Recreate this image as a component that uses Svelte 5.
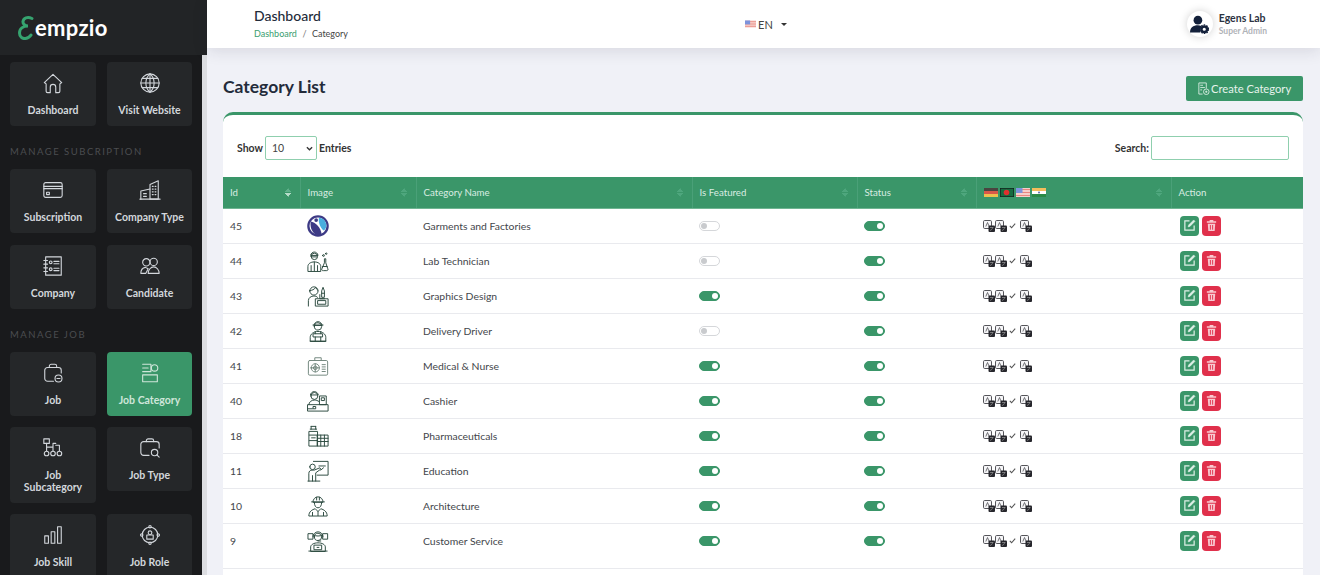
<script>
  const circ = (x, y, r) => `M${x - r} ${y}a${r} ${r} 0 1 0 ${r * 2} 0a${r} ${r} 0 1 0 ${-r * 2} 0z`;
  const box = (x, y, w, h) => `M${x} ${y}h${w}v${h}h${-w}z`;

  const icons = {
    home: ["M2.500 11.500 12 2.500l9.500 9-2 1.500v8a1.500 1.500 0 0 1-1.500 1.500h-3v-6a3 3 0 0 0-6 0v6H6a1.500 1.500 0 0 1-1.500-1.500v-8z"],
    globe: [circ(12, 12, 10), "M2 12h20M3.400 7h17.200M3.400 17h17.200M12 2v20", "M12 2c-6 5-6 15 0 20M12 2c6 5 6 15 0 20"],
    card: ["M4 4h16a2 2 0 0 1 2 2v12a2 2 0 0 1-2 2H4a2 2 0 0 1-2-2V6a2 2 0 0 1 2-2z", "M2 8h20M2 10.500h20", box(5, 14.500, 3, 2.500)],
    building: ["M12 22V6l9-4v20z", "M2 22v-9l10-2", "M1 22h22", "M14.500 8h1M17.500 8h1M14.500 11h1M17.500 11h1M14.500 14h1M17.500 14h1M14.500 17h1M17.500 17h1M5 16h3M5 19h3"],
    book: [box(4, 2, 17, 20), "M2 6h4M2 10h4M2 14h4M2 18h4", circ(9.500, 8, 1.500), circ(9.500, 15.500, 1.500), "M13 7h5.500M13 9.500h5.500M13 14.500h5.500M13 17h5.500"],
    people: [circ(8, 8, 4), circ(16, 7.500, 4), "M2 20c0-4 2-6 5-6.500l3 1.500-2.500 5z", "M10 20c0-4 3-7 6-7s6 3 6 7z"],
    jobicon: ["M8 6V4.500A2 2 0 0 1 10 2.500h4a2 2 0 0 1 2 2V6", "M12.500 21H6a3 3 0 0 1-3-3V9a3 3 0 0 1 3-3h12a3 3 0 0 1 3 3v3", circ(18, 18, 3.800), "M16.300 18h3.400"],
    category: ["M4 2.500h9v8H4", circ(17, 6.500, 3.500), box(4, 14, 16, 7.500), "M4 6.500h6"],
    tree: [box(2, 2, 6, 5), "M5 7v8M5 11h7V7h3M12 11v4M19 11v4M15 9h4v2", circ(5, 18, 2.500), circ(12, 18, 2.500), circ(19, 18, 2.500)],
    jobtype: ["M8 5V4a2 2 0 0 1 2-2h4a2 2 0 0 1 2 2v1", "M11 20H5a3 3 0 0 1-3-3V8a3 3 0 0 1 3-3h14a3 3 0 0 1 3 3v4", circ(17, 17, 3.500), "M19.500 19.500 22 22"],
    bars: [box(3, 13, 4, 8), box(10, 8.500, 4, 12.500), box(17, 3, 4, 18)],
    role: [circ(12, 12, 8.500), box(8.500, 12, 7, 4.500), circ(12, 9.500, 2), circ(12, 3, 1.300), circ(12, 21, 1.300), circ(3, 12, 1.300), circ(21, 12, 1.300)],

    lab: [circ(8, 7, 3.500), "M4 5.500c1-4.500 7-4.500 8 0z", "M5 7.500h6", "M1 23v-5c0-3 3-5 7-5s7 2 7 5v5z", "M8 13v10M4.500 17v6M11.500 17v6", "M19 10v4l-2.500 6a1.500 1.500 0 0 0 1.500 2.500h3a1.500 1.500 0 0 0 1.500-2.500L20.500 14v-4z", "M17 18h5", circ(18, 6, 1), circ(21, 4, .8)],
    design: [circ(7.500, 6.500, 4.500), "M3 6c2.500 0 5-1 6.500-3.500 .5 1.500 1.500 3 2.500 3.500", "M1.500 23v-6c0-3 3-5 6-5 2 0 3 .500 4 1.500", box(9.500, 15, 13.500, 8), box(12, 17, 8.500, 4), "M16 13V6.500l1.500-4 1.500 4V13zM16 9h3M14 10.500v4.500h5"],
    driver: [circ(12, 7, 4), "M7.500 5.500c1-5 8-5 9 0z", "M6.500 5.500h11", "M3.500 23v-4c0-3.500 3.500-6.500 8.500-6.500s8.500 3 8.500 6.500v4z", box(7, 15, 10, 3.500), "M3.500 23h17M9 12.500V15M15 12.500V15M9 18.500V23M15 18.500V23"],
    medical: ["M3 6h18a1.500 1.500 0 0 1 1.500 1.500v13A1.500 1.500 0 0 1 21 22H3a1.500 1.500 0 0 1-1.500-1.500v-13A1.500 1.500 0 0 1 3 6z", "M8.500 6V3h7v3", circ(9, 14, 4.500), circ(9, 14, 2), "M9 9.500v9M4.500 14h9M16.500 10.500h3.500M16.500 13h3.500M16.500 15.500h3.500M16.500 18h3.500"],
    cashier: [circ(8, 6.500, 3.800), "M3.800 5c1-4.500 7.400-4.500 8.400 0z", "M2 16c0-3 3-5 6-5 2 0 3.500.500 5 1.500", box(1, 16, 22, 7), box(14, 6.500, 7, 9.500), box(16, 8.500, 3, 3), box(7, 18, 2.500, 2.500), "M1 20.500h5"],
    pharma: [box(2.500, 7, 9, 16), "M3.500 4.500h7M4.500 1.500h5M4.500 1.500v3M9.500 1.500v3M2.500 11h9M2.500 17h9", box(11.500, 11, 11.500, 12), "M11.500 14.500h11.500M11.500 18h11.500M15 11v12M19 11v12M5 14h4"],
    teacher: [circ(6, 7.500, 3), "M2 23v-8.500c0-2 1.500-3.500 3.500-3.500h2.500l6-2.500 1 1.500-5.500 4V23", "M6 17v6M1 23h13", "M7 1.500h16v15H11", "M13 6.500h7M15 11l3-2.500"],
    architect: ["M6.500 7.500a5.500 5.500 0 0 1 11 0zM5 7.500h14M10.500 2.500v3M13.500 2.500v3", "M8 8c0 3.500 1.500 6 4 6s4-2.500 4-6", "M2 22.500c0-4.500 3.500-6.500 7-7.500l3 3 3-3c3.500 1 7 3 7 7.500z", "M12 18v4.500M6 19v3.500M18 19v3.500"],
    support: [circ(12, 7.500, 4), "M6.500 7.500a5.500 5.500 0 0 1 11 0M12 12h3", "M7 5.500C9 7 15 7 17 5.500", box(1.500, 4, 5, 6), box(17.500, 4, 5, 6), "M4 23v-4.500c0-2.500 3.500-4.500 8-4.500s8 2 8 4.500V23z", box(8, 16.500, 8, 5), "M2 23h20M11 19h2"]
  };

  const nav = [
    { items: [["home", "Dashboard"], ["globe", "Visit Website"]] },
    { title: "MANAGE SUBCRIPTION", items: [["card", "Subscription"], ["building", "Company Type"], ["book", "Company"], ["people", "Candidate"]] },
    { title: "MANAGE JOB", items: [["jobicon", "Job"], ["category", "Job Category"], ["tree", "Job Subcategory"], ["jobtype", "Job Type"], ["bars", "Job Skill"], ["role", "Job Role"]] }
  ];

  const rows = [
    { id: 45, icon: "logo", name: "Garments and Factories", featured: false },
    { id: 44, icon: "lab", name: "Lab Technician", featured: false },
    { id: 43, icon: "design", name: "Graphics Design", featured: true },
    { id: 42, icon: "driver", name: "Delivery Driver", featured: false },
    { id: 41, icon: "medical", name: "Medical & Nurse", featured: true },
    { id: 40, icon: "cashier", name: "Cashier", featured: true },
    { id: 18, icon: "pharma", name: "Pharmaceuticals", featured: true },
    { id: 11, icon: "teacher", name: "Education", featured: true },
    { id: 10, icon: "architect", name: "Architecture", featured: true },
    { id: 9, icon: "support", name: "Customer Service", featured: true }
  ];

  const columns = ["Id", "Image", "Category Name", "Is Featured", "Status", "", "Action"];
</script>

{#snippet icon(name, cls)}
  <svg class={cls} viewBox="0 0 24 24" fill="none" stroke="currentColor" stroke-linejoin="round" stroke-linecap="round" aria-hidden="true">
    {#each icons[name] as d}<path {d} />{/each}
  </svg>
{/snippet}

{#snippet usFlag()}
  <svg class="flag" viewBox="0 0 14 9" aria-hidden="true">
    <rect width="14" height="9" fill="#f6cfc9" />
    <path d="M0 1.500h14M0 4.500h14M0 7.500h14" stroke="#e8877f" />
    <rect width="6.500" height="5" fill="#7d93dc" />
  </svg>
{/snippet}

{#snippet translate()}
  <svg class="tr" viewBox="0 0 12 12" aria-hidden="true">
    <rect x=".5" y=".5" width="8" height="8" rx="1.200" fill="#f6f6f8" stroke="#55555a" />
    <path d="M2.800 6.500 4.500 2.500l1.700 4" fill="none" stroke="#55555a" stroke-width=".8" />
    <rect x="5.500" y="5.500" width="6.500" height="6.500" rx="1" fill="#26262c" />
    <path d="M7 7.500h3.500M9.500 7.500c0 1.500-1 2.500-2.500 3" fill="none" stroke="#aaa" stroke-width=".6" />
  </svg>
{/snippet}

<div class="app">
  <aside class="sidebar">
    <div class="brand">
      <svg class="brand-mark" viewBox="0 0 16 24" fill="none" stroke="#36a36f" stroke-width="3" stroke-linecap="round" aria-hidden="true">
        <path d="M14.500 2.500C10 .5 6 2 5.500 5.500c-.3 2.500 2 4.500 5 4.500-5 0-8.500 2.500-8.500 7 0 4 3 6 6 5.500 2.500-.4 4.500-1.800 5.500-3.500" />
      </svg>
      <span>empzio</span>
    </div>
    <div class="side-body">
      <nav>
        {#each nav as group}
          {#if group.title}<h6>{group.title}</h6>{/if}
          <div class="tiles">
            {#each group.items as [ic, label]}
              <a class="tile" class:active={label === "Job Category"} href="#top">
                {@render icon(ic, "tile-icon")}
                <span>{label}</span>
              </a>
            {/each}
          </div>
        {/each}
      </nav>
      <div class="scrollbar"></div>
    </div>
  </aside>

  <div class="main">
    <header class="topbar">
      <div class="crumbs">
        <h1>Dashboard</h1>
        <p><a href="#top">Dashboard</a><i>/</i>Category</p>
      </div>
      <div class="lang">
        {@render usFlag()}
        <span>EN</span>
        <b class="caret"></b>
      </div>
      <div class="user">
        <div class="avatar">
          <svg viewBox="0 0 24 24" aria-hidden="true">
            <circle cx="10" cy="6.500" r="5.500" fill="#13203a" />
            <path d="M0 22c0-6 4-9 10-9 1.500 0 3 .3 4 1l-1 8z" fill="#13203a" />
            <circle cx="18" cy="18" r="3.500" fill="none" stroke="#13203a" stroke-width="3" />
            <circle cx="18" cy="18" r="5.500" fill="none" stroke="#13203a" stroke-width="1.500" stroke-dasharray="2 1.500" />
          </svg>
        </div>
        <div>
          <strong>Egens Lab</strong>
          <small>Super Admin</small>
        </div>
      </div>
    </header>

    <main class="content">
      <div class="title-row">
        <h2>Category List</h2>
        <button class="create">
          <svg viewBox="0 0 14 14" fill="none" stroke="currentColor" stroke-width=".9" aria-hidden="true">
            <path d="M6 13H2V1h8v6" />
            <path d="M3.500 3.500h3M3.500 6h5M3.500 8.500h2" />
            <circle cx="10" cy="10.500" r="3" />
            <path d="M8.800 10.500h2.400M10 9.300v2.400" />
          </svg>
          Create Category
        </button>
      </div>

      <section class="card">
        <div class="controls">
          <label>Show
            <select>
              <option>10</option>
              <option>25</option>
              <option>50</option>
            </select>
            Entries
          </label>
          <label>Search:
            <input type="search" />
          </label>
        </div>

        <table>
          <colgroup>
            <col style="width: 77px" />
            <col style="width: 116px" />
            <col style="width: 276px" />
            <col style="width: 165px" />
            <col style="width: 119px" />
            <col style="width: 195px" />
            <col style="width: 132px" />
          </colgroup>
          <thead>
            <tr>
              {#each columns as col}
                <th>
                  {#if col}
                    {col}
                  {:else}
                    <span class="flags">
                      <svg class="flag" viewBox="0 0 14 9" aria-hidden="true">
                        <rect width="14" height="3" fill="#4a4440" />
                        <rect y="3" width="14" height="3" fill="#d9584a" />
                        <rect y="6" width="14" height="3" fill="#eec04e" />
                      </svg>
                      <svg class="flag" viewBox="0 0 14 9" aria-hidden="true">
                        <rect x=".4" y=".4" width="13.200" height="8.200" fill="#156b40" stroke="#10261c" stroke-width=".8" />
                        <circle cx="6.500" cy="4.500" r="2.800" fill="#e0302e" />
                      </svg>
                      {@render usFlag()}
                      <svg class="flag" viewBox="0 0 14 9" aria-hidden="true">
                        <rect width="14" height="3" fill="#f4bd5c" />
                        <rect y="3" width="14" height="3" fill="#fff" />
                        <rect y="6" width="14" height="3" fill="#2a8a45" />
                        <circle cx="7" cy="4.500" r="1" fill="#5a6ba8" />
                      </svg>
                    </span>
                  {/if}
                  {#if col !== "Action"}
                    <span class="sort" class:desc={col === "Id"}></span>
                  {/if}
                </th>
              {/each}
            </tr>
          </thead>
          <tbody>
            {#each rows as row}
              <tr>
                <td>{row.id}</td>
                <td>
                  {#if row.icon === "logo"}
                    <svg class="cat-icon" viewBox="0 0 24 24" aria-hidden="true">
                      <circle cx="12" cy="12" r="10.500" fill="#fff" stroke="#3d3a85" stroke-width="2.500" />
                      <path d="M13 3a9 9 0 0 1 8 7c.500 3-1 6-3 7-3-3-6-8-5-14z" fill="#49aede" />
                      <path d="M4 7c5 1 11 6 12 14-1 1-3 1.500-5 1C6 20 3 14 4 7z" fill="#3d3a85" />
                      <circle cx="10" cy="5.500" r="2" fill="#3d3a85" />
                    </svg>
                  {:else}
                    {@render icon(row.icon, row.icon === "medical" ? "cat-icon pale" : "cat-icon")}
                  {/if}
                </td>
                <td>{row.name}</td>
                <td><span class="switch" class:on={row.featured}></span></td>
                <td><span class="switch on"></span></td>
                <td>
                  <span class="translations">
                    {@render translate()}
                    {@render translate()}
                    <svg class="tick" viewBox="0 0 10 10" aria-hidden="true">
                      <path d="M2 5.500 4 7.500 8 3" fill="none" stroke="#555" stroke-width="1.200" />
                    </svg>
                    {@render translate()}
                  </span>
                </td>
                <td>
                  <span class="actions">
                    <button class="btn edit" aria-label="Edit">
                      <svg viewBox="0 0 14 14" fill="none" stroke="currentColor" stroke-width="1.300" aria-hidden="true">
                        <path d="M7 2H2v10h10V7" />
                        <path d="M5.500 8.500 6 6.500 11.500 1l1.500 1.500L7.500 8z" fill="currentColor" stroke-width=".5" />
                      </svg>
                    </button>
                    <button class="btn del" aria-label="Delete">
                      <svg viewBox="0 0 14 14" aria-hidden="true">
                        <path d="M2 2.500h10v1.500H2zM5 1h4v1.500H5z" fill="currentColor" />
                        <path d="M3 5h8l-.6 8H3.600z" fill="currentColor" />
                        <path d="M5.800 6.500v5M8.200 6.500v5" stroke="#e0304b" />
                      </svg>
                    </button>
                  </span>
                </td>
              </tr>
            {/each}
          </tbody>
        </table>
      </section>
    </main>
  </div>
</div>

<style>
  :global(body) {
    margin: 0;
    font-family: Lato, "Liberation Sans", sans-serif;
  }

  .app {
    display: flex;
    height: 575px;
    overflow: hidden;
    background: #f0f1f7;
  }

  .sidebar {
    flex: 0 0 207px;
    display: flex;
    flex-direction: column;
    background: #191a1c;
  }

  .brand {
    flex: 0 0 55px;
    display: flex;
    align-items: center;
    padding-left: 17px;
    background: #222426;
    color: #fff;
    font-size: 22px;
    font-weight: 700;
    letter-spacing: 0.3px;
    box-sizing: border-box;
  }

  .brand-mark {
    width: 17px;
    height: 24px;
    margin-right: 1px;
  }

  .side-body {
    flex: 1;
    display: flex;
    min-height: 0;
  }

  nav {
    flex: 1;
    padding: 7px 10px 0;
  }

  .scrollbar {
    flex: 0 0 5px;
    background: #dcdde1;
  }

  h6 {
    margin: 0;
    padding: 19px 0 10px;
    font-size: 9.500px;
    font-weight: 400;
    line-height: 14px;
    letter-spacing: 1.500px;
    color: #4b4d50;
  }

  .tiles {
    display: grid;
    grid-template-columns: 86px 85px;
    gap: 11.500px 11px;
    align-items: start;
  }

  .tiles:last-child {
    row-gap: 11px;
  }

  .tile {
    display: flex;
    flex-direction: column;
    align-items: center;
    padding: 10px 6px 10px;
    border-radius: 4px;
    background: #252729;
    color: #d3d7dc;
    font-size: 10.500px;
    font-weight: 700;
    line-height: 12px;
    text-align: center;
    text-decoration: none;
  }

  .tile.active {
    background: #3a9669;
    color: #cfe6da;
  }

  .tile-icon {
    width: 22px;
    height: 22px;
    margin-bottom: 10px;
    stroke-width: 1.200;
  }

  .main {
    flex: 1;
    min-width: 0;
  }

  .topbar {
    display: grid;
    grid-template-columns: 1fr auto 1fr;
    align-items: center;
    height: 48px;
    padding: 0 53px 0 47px;
    background: #fff;
    box-shadow: 0 3px 16px rgba(30, 35, 60, 0.12);
    position: relative;
  }

  .crumbs {
    padding-bottom: 2px;
  }

  h1 {
    margin: 0 0 4px;
    font-size: 14px;
    font-weight: 500;
    line-height: 17px;
    color: #232b3a;
  }

  .crumbs p {
    margin: 0;
    font-size: 9px;
    line-height: 12px;
    color: #444;
  }

  .crumbs a {
    color: #3a9e70;
    text-decoration: none;
  }

  .crumbs i {
    margin: 0 5.500px;
    font-style: normal;
    color: #777;
  }

  .lang {
    display: flex;
    align-items: center;
    margin-left: 11px;
    font-size: 11px;
    color: #444;
  }

  .lang .flag {
    width: 11px;
    height: 8px;
    margin-right: 2px;
  }

  .caret {
    margin-left: 8px;
    border: 3px solid transparent;
    border-top: 3px solid #333;
    border-bottom: 0;
  }

  .user {
    justify-self: end;
    display: flex;
    align-items: center;
    gap: 6px;
  }

  .avatar {
    display: flex;
    align-items: center;
    justify-content: center;
    width: 26px;
    height: 26px;
    border-radius: 50%;
    background: #fff;
    box-shadow: 0 0 8px rgba(0, 0, 0, 0.18);
  }

  .avatar svg {
    width: 19px;
    height: 19px;
  }

  .user strong {
    display: block;
    font-size: 10.500px;
    line-height: 13px;
    color: #2c3342;
  }

  .user small {
    display: block;
    margin-top: 1px;
    font-size: 8.500px;
    font-weight: 700;
    line-height: 11px;
    color: #b0b3b8;
  }

  .content {
    padding: 28px 17px 0 16px;
  }

  .title-row {
    display: flex;
    justify-content: space-between;
    align-items: flex-start;
    margin-bottom: 11px;
  }

  h2 {
    margin: 0;
    font-size: 17.500px;
    font-weight: 700;
    line-height: 22px;
    color: #232b3a;
  }

  .create {
    display: flex;
    align-items: center;
    gap: 1px;
    height: 25px;
    width: 117px;
    padding: 0 0 0 11px;
    border: 0;
    border-radius: 2px;
    background: #3a9669;
    color: #e6f3ec;
    font: 400 11.200px Lato, sans-serif;
  }

  .create svg {
    width: 13px;
    height: 13px;
  }

  .card {
    border-top: 3px solid #3a9669;
    border-radius: 10px 10px 0 0;
    background: #fff;
    min-height: 460px;
  }

  .controls {
    display: flex;
    justify-content: space-between;
    align-items: center;
    height: 62px;
    padding: 4px 14px 0;
    box-sizing: border-box;
    font-size: 10.500px;
    font-weight: 700;
    color: #333;
  }

  .controls label {
    display: flex;
    align-items: center;
    gap: 2px;
  }

  select,
  input {
    box-sizing: border-box;
    height: 24px;
    border: 1px solid #8fcfae;
    border-radius: 2px;
    background: #fff;
    font: 400 10.500px Lato, sans-serif;
    color: #444;
    outline: none;
  }

  select {
    appearance: none;
    width: 52px;
    padding-left: 6px;
    background: #fff url("data:image/svg+xml,%3Csvg xmlns='http://www.w3.org/2000/svg' viewBox='0 0 8 5'%3E%3Cpath d='M1 1l3 3 3-3' fill='none' stroke='%23333' stroke-width='1.500'/%3E%3C/svg%3E") no-repeat right 3px center / 7px 5px;
  }

  input {
    width: 138px;
  }

  table {
    width: 1080px;
    table-layout: fixed;
    border-collapse: collapse;
    font-size: 10.400px;
    color: #43464b;
  }

  th {
    position: relative;
    height: 31px;
    padding: 0 7px;
    box-sizing: border-box;
    background: #3a9669;
    border-bottom: 1px solid #6fb592;
    border-left: 1px solid #4aa078;
    color: #d9ece2;
    font-size: 9.700px;
    font-weight: 400;
    text-align: left;
  }

  th:first-child {
    border-left: 0;
  }

  .sort {
    position: absolute;
    top: 11px;
    right: 8px;
    display: block;
    width: 7px;
    height: 9px;
    background:
      linear-gradient(135deg, transparent 50%, #4ea67d 50%) 0 0 / 3.500px 4px no-repeat,
      linear-gradient(225deg, transparent 50%, #4ea67d 50%) 3.500px 0 / 3.500px 4px no-repeat,
      linear-gradient(45deg, transparent 50%, #4ea67d 50%) 0 5px / 3.500px 4px no-repeat,
      linear-gradient(315deg, transparent 50%, #4ea67d 50%) 3.500px 5px / 3.500px 4px no-repeat;
  }

  .sort.desc {
    background:
      linear-gradient(135deg, transparent 50%, #5fb08a 50%) 0 0 / 3.500px 4px no-repeat,
      linear-gradient(225deg, transparent 50%, #5fb08a 50%) 3.500px 0 / 3.500px 4px no-repeat,
      linear-gradient(45deg, transparent 50%, #b6dcc9 50%) 0 5px / 3.500px 4px no-repeat,
      linear-gradient(315deg, transparent 50%, #b6dcc9 50%) 3.500px 5px / 3.500px 4px no-repeat;
  }

  .flags {
    display: flex;
    gap: 2px;
  }

  .flag {
    display: block;
    width: 14px;
    height: 9px;
  }

  td {
    height: 35px;
    padding: 0 7px;
    box-sizing: border-box;
    border-bottom: 1px solid #e9eaee;
    vertical-align: middle;
  }

  tbody tr:last-child td {
    height: 45px;
    padding-bottom: 10px;
  }

  .cat-icon {
    display: block;
    width: 22px;
    height: 22px;
    color: #2c4a40;
    stroke-width: 1.050;
  }

  .cat-icon.pale {
    color: #71867d;
  }

  .switch {
    position: relative;
    display: block;
    width: 21px;
    height: 10px;
    box-sizing: border-box;
    border: 1px solid #d5d7da;
    border-radius: 6px;
    background: #fff;
  }

  .switch::after {
    content: "";
    position: absolute;
    top: 1px;
    left: 1px;
    width: 6px;
    height: 6px;
    border-radius: 50%;
    background: #c9cbce;
  }

  .switch.on {
    border-color: #3a9669;
    background: #3a9669;
  }

  .switch.on::after {
    left: auto;
    right: 1px;
    background: #fff;
  }

  .translations {
    display: flex;
    align-items: center;
  }

  .tr {
    display: block;
    width: 12px;
    height: 12px;
  }

  .tick {
    width: 9px;
    height: 9px;
    margin: 0 3px 0 1px;
  }

  .actions {
    display: flex;
    gap: 3px;
    margin-left: 2px;
  }

  .btn {
    display: flex;
    align-items: center;
    justify-content: center;
    width: 19px;
    height: 20px;
    padding: 0;
    border: 0;
    border-radius: 4px;
    color: #dff0e7;
  }

  .btn svg {
    width: 13px;
    height: 13px;
  }

  .edit {
    background: #3a9669;
  }

  .del {
    background: #e0304b;
    color: #f8c9d0;
  }
</style>
